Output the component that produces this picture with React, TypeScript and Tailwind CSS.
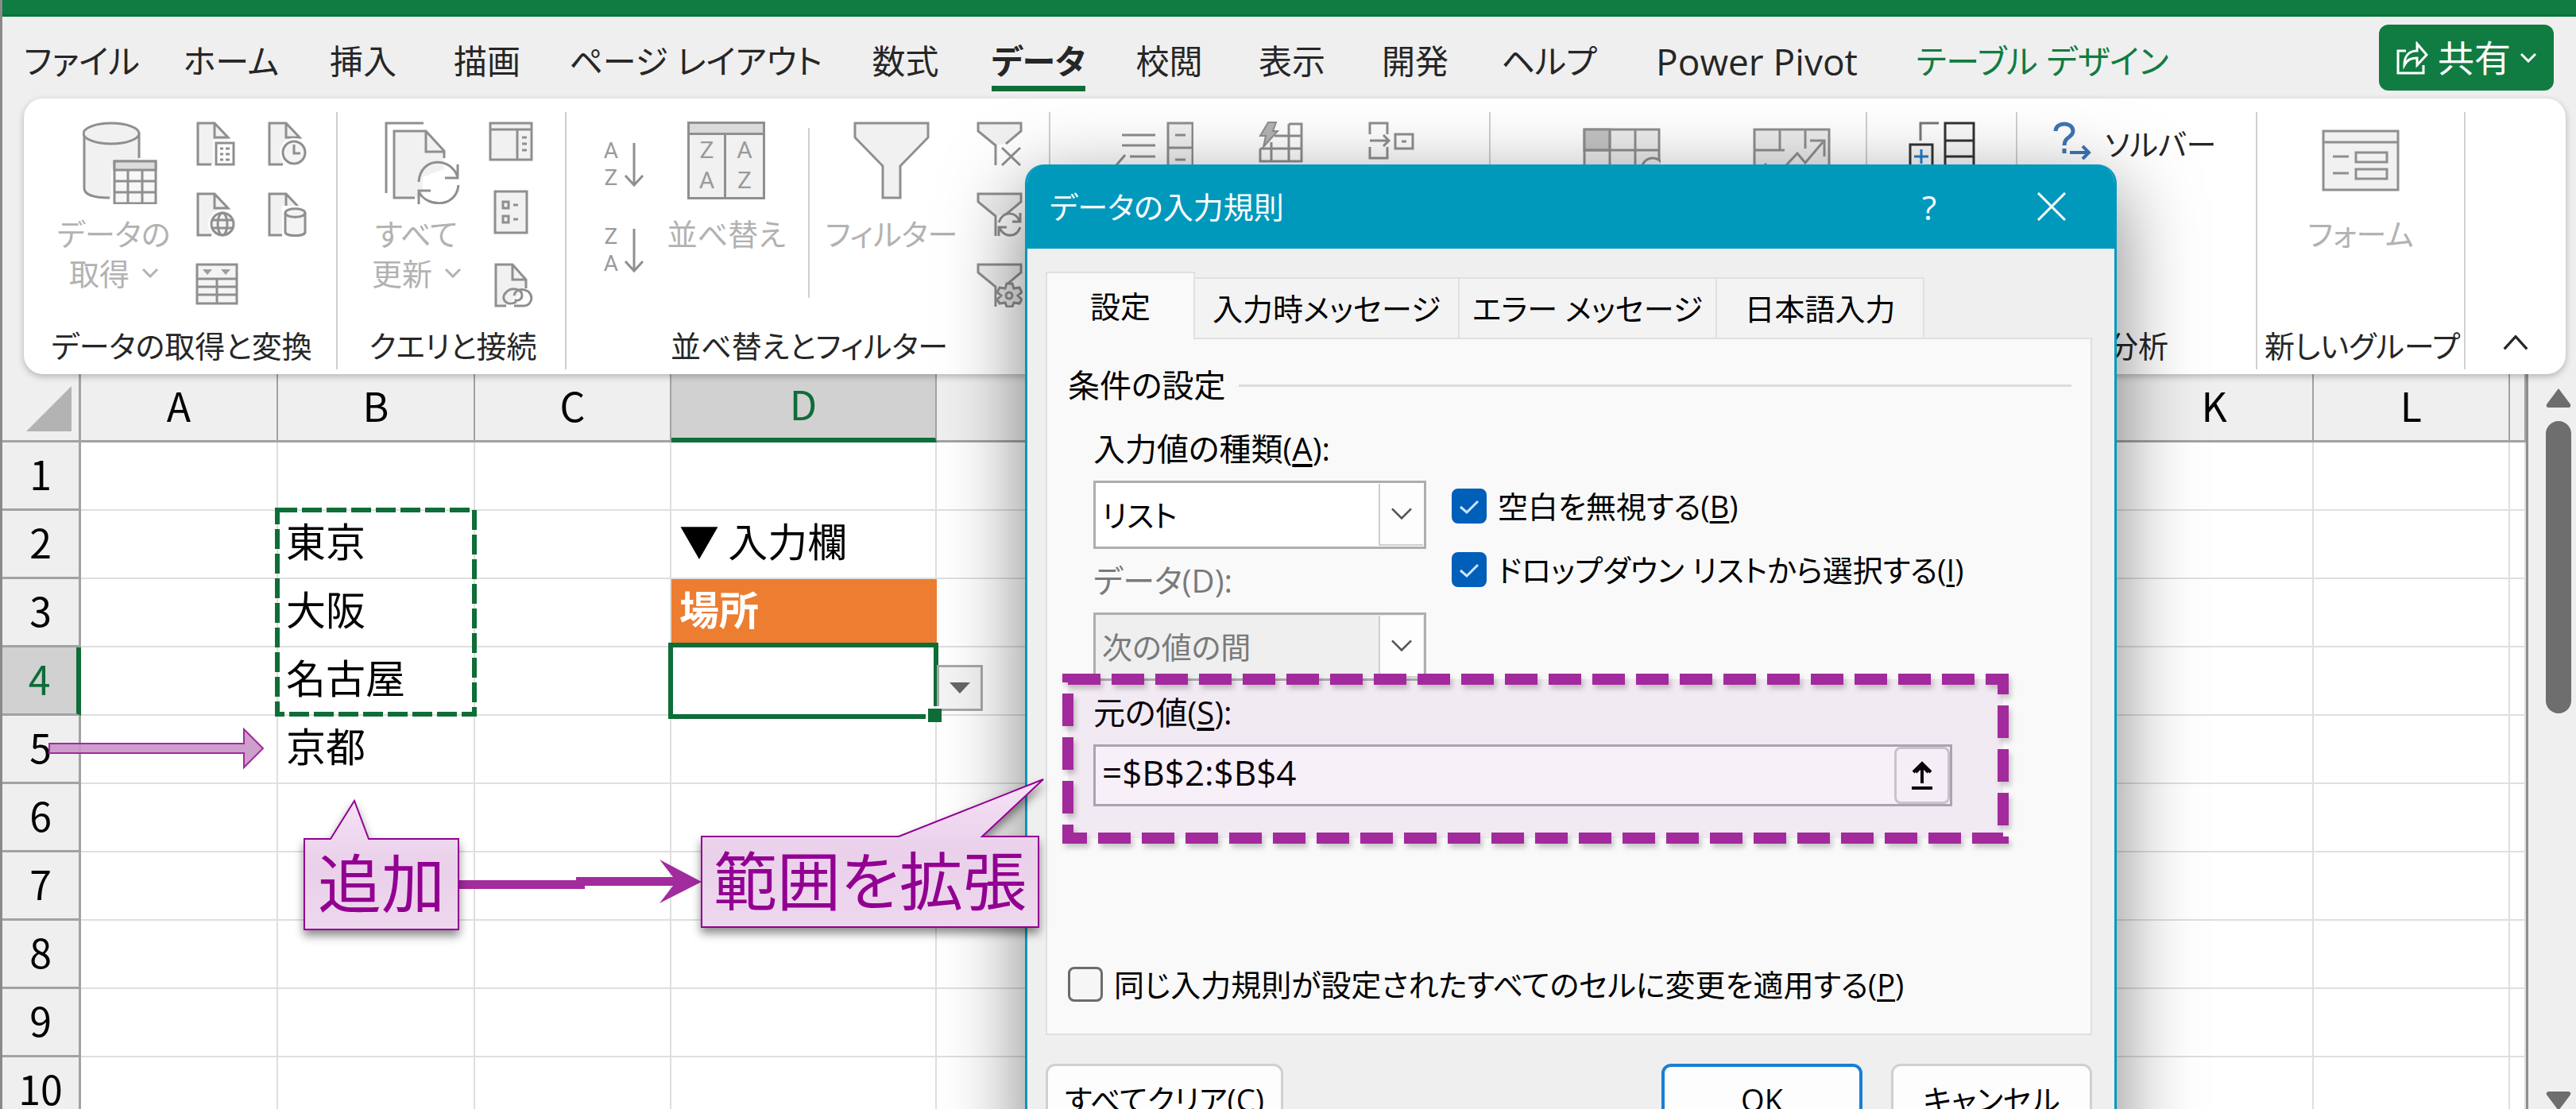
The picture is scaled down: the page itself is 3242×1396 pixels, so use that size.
import React, { useState } from "react";

const TABS = [
      "ファイル",
      "ホーム",
      "挿入",
      "描画",
      "ページ レイアウト",
      "数式",
      "データ",
      "校閲",
      "表示",
      "開発",
      "ヘルプ",
      "Power Pivot",
      "テーブル デザイン",
];

const COLUMNS = ["A", "B", "C", "D", "E", "F", "G", "H", "I", "J", "K", "L", ""];
const ROWS = [1, 2, 3, 4, 5, 6, 7, 8, 9, 10];

const CELLS: Record<string, string> = {
      B2: "東京",
      B3: "大阪",
      B4: "名古屋",
      B5: "京都",
      D2: "▼ 入力欄",
      D3: "場所",
};

const Icon = ({
      w,
      h,
      children,
}: {
      w: number;
      h: number;
      children: React.ReactNode;
}) => (
      <svg
            width={w}
            height={h}
            viewBox={`0 0 ${w} ${h}`}
            fill="none"
            stroke="#8f8f8f"
            strokeWidth={3}
            className="shrink-0"
            aria-hidden="true"
      >
            {children}
      </svg>
);

const Page = () => (
      <>
            <path d="M3 2H24L41 21V54H3Z" fill="#f1f1f1" stroke="none" />
            <path d="M20 54H3V2H24L41 20H24V2" />
      </>
);

const DatabaseIcon = () => (
      <Icon w={94} h={104}>
            <path d="M2 14V84C2 92 14 97 36 97V60H71V14Z" fill="#f1f1f1" stroke="none" />
            <path d="M2 14V84C2 91 12 96 34 96M71 14V46" />
            <ellipse cx="36" cy="15" rx="35" ry="13" fill="#f1f1f1" />
            <rect x="40" y="50" width="52" height="53" fill="#f7f7f7" />
            <rect x="40" y="50" width="52" height="11" fill="#dcdcdc" />
            <path d="M57 61V103M75 61V103M40 75H92M40 89H92" strokeWidth={3} />
      </Icon>
);

const PageListIcon = () => (
      <Icon w={50} h={56}>
            <Page />
            <rect x="22" y="23" width="28" height="33" fill="#fff" stroke="none" />
            <rect x="26" y="27" width="22" height="27" fill="#fff" />
            <path d="M31 34H35M38 34H43M31 41H35M38 41H43M31 48H35M38 48H43" />
      </Icon>
);

const PageClockIcon = () => (
      <Icon w={50} h={56}>
            <Page />
            <circle cx="34" cy="39" r="18" fill="#fff" stroke="none" />
            <circle cx="34" cy="39" r="14" fill="#f4f4f4" />
            <path d="M34 29V40H42" />
      </Icon>
);

const PageGlobeIcon = () => (
      <Icon w={50} h={56}>
            <Page />
            <circle cx="34" cy="40" r="18" fill="#fff" stroke="none" />
            <circle cx="34" cy="40" r="14" fill="#f4f4f4" />
            <ellipse cx="34" cy="40" rx="6" ry="14" />
            <path d="M21 35H47M21 45H47" />
      </Icon>
);

const PageDatabaseIcon = () => (
      <Icon w={50} h={56}>
            <Page />
            <rect x="19" y="17" width="31" height="39" fill="#fff" stroke="none" />
            <path d="M23 26C23 19 48 19 48 26V50C48 56 23 56 23 50Z" fill="#f4f4f4" />
            <path d="M23 26C23 33 48 33 48 26" />
      </Icon>
);

const TableFilterIcon = () => (
      <Icon w={54} h={54}>
            <rect x="2" y="2" width="50" height="49" fill="#f4f4f4" />
            <path d="M2 20H52M2 30H52M2 40H52M27 20V51" />
            <path d="M9 8H21L15 15ZM32 8H44L38 15Z" fill="#9d9d9d" stroke="none" />
      </Icon>
);

const RefreshAllIcon = () => (
      <Icon w={96} h={104}>
            <path d="M2 90V2H49" />
            <path d="M12 96V12H52L75 36V60L48 70V96Z" fill="#f1f1f1" stroke="none" />
            <path d="M38 96H12V12H52L75 37V46M52 12V38H75" />
            <path d="M43 76C45 44 84 44 92 70M92 54V71H76M93 80C90 110 52 108 43 88M43 104V87H58" />
      </Icon>
);

const PaneIcon = () => (
      <Icon w={56} h={50}>
            <rect x="2" y="2" width="52" height="46" fill="#f1f1f1" />
            <path d="M2 10H54M36 10V48M42 20H48M42 28H48M42 36H48" />
      </Icon>
);

const PropertiesIcon = () => (
      <Icon w={56} h={56}>
            <rect x="8" y="2" width="40" height="52" fill="#f1f1f1" />
            <path d="M18 15H25V23H18ZM18 33H25V41H18ZM31 19H37M31 37H37" />
      </Icon>
);

const PageLinkIcon = () => (
      <Icon w={56} h={56}>
            <path d="M9 2H32L47 21V32L22 54H9Z" fill="#f1f1f1" stroke="none" />
            <path d="M22 54H9V2H30L47 21V32M30 2V21H47" />
            <path d="M35 49C22 56 14 44 22 37C28 30 42 32 42 41C42 46 36 49 33 46M32 41C34 32 44 32 50 36C58 44 52 54 44 54H32" />
      </Icon>
);

const SortIcon = ({ first, second }: { first: string; second: string }) => (
      <span className="flex items-center gap-1 text-[#9a9a9a]">
            <span className="flex w-6 flex-col text-center text-[28px] leading-[34px] [font-family:Roboto,sans-serif]">
                  <span>{first}</span>
                  <span>{second}</span>
            </span>
            <Icon w={26} h={58}>
                  <path d="M13 2V54M2 43L13 55L24 43" />
            </Icon>
      </span>
);

const SortDialogIcon = () => (
      <span className="flex h-[98px] w-[98px] flex-col border-3 border-[#8f8f8f] bg-[#f1f1f1] text-[30px] leading-[38px] text-[#9a9a9a] [font-family:Roboto,sans-serif]">
            <span className="h-[14px] border-b-3 border-[#8f8f8f] bg-[#dadada]" />
            <span className="grid flex-1 grid-cols-2 text-center">
                  <span className="flex flex-col border-r-3 border-[#8f8f8f]">
                        <span>Z</span>
                        <span>A</span>
                  </span>
                  <span className="flex flex-col">
                        <span>A</span>
                        <span>Z</span>
                  </span>
            </span>
      </span>
);

const FunnelIcon = () => (
      <Icon w={96} h={98}>
            <path d="M2 2H94V20L59 56V96H37V56L2 20Z" fill="#f1f1f1" />
      </Icon>
);

const SmallFunnel = ({ kind }: { kind: "clear" | "reapply" | "advanced" }) => (
      <Icon w={58} h={56}>
            <path d="M2 2H56V12L38 27L24 30L2 12Z" fill="#f1f1f1" stroke="none" />
            <path d="M24 55V30L2 12V2H56V12L37 28" />
            {kind === "clear" && <path d="M32 33L55 55M55 33L32 55" />}
            {kind === "reapply" && (
                  <path d="M28 38C34 22 50 25 54 36M55 26V37H45M55 44C50 58 35 57 29 45M28 55V44H38" />
            )}
            {kind === "advanced" && (
                  <>
                        <path
                              d="M38 26H45L47 32L54 31L57 37L52 41L57 46L54 51L47 50L45 55H38L36 50L29 51L26 46L31 41L26 37L29 31L36 32Z"
                              fill="#e8e8e8"
                        />
                        <circle cx="41" cy="41" r="4" />
                  </>
            )}
      </Icon>
);

const TextToColumnsIcon = () => (
      <Icon w={98} h={96}>
            <path d="M8 17H50M8 30H50M18 44H50M12 42L0 56" />
            <path d="M66 2H97V96H66ZM66 33H97M66 64H97" fill="#f1f1f1" />
            <path d="M75 17H88M75 48H88" />
      </Icon>
);

const FlashFillIcon = () => (
      <Icon w={56} h={52}>
            <path d="M38 3H54V50H2V34M20 18H54M2 34H54M16 26V50M38 3V50" />
            <path d="M12 1H22L18 12H24L6 32L9 18H2Z" fill="#b4b4b4" strokeWidth={2} />
      </Icon>
);

const ConsolidateIcon = () => (
      <Icon w={58} h={50}>
            <path d="M2 16V2H24V16M2 32V46H24V32M2 24H26M19 17L26 24L19 31" />
            <path d="M34 16H56V34H34ZM42 25H48" />
      </Icon>
);

const WhatIfIcon = () => (
      <Icon w={98} h={86}>
            <rect x="2" y="2" width="94" height="84" fill="#ededed" />
            <rect x="2" y="2" width="32" height="26" fill="#c4c4c4" />
            <path d="M34 2V86M66 2V86M2 28H96M2 56H96" />
            <circle cx="88" cy="52" r="14" fill="#ededed" />
      </Icon>
);

const ForecastIcon = () => (
      <Icon w={98} h={86}>
            <rect x="2" y="2" width="94" height="84" fill="#ededed" />
            <path d="M34 2V28M66 2V26M2 28H40" />
            <path d="M4 58L16 46L28 62L56 32L66 44L88 18M72 16H90V36" />
      </Icon>
);

const GroupOutlineIcon = () => (
      <svg width="84" height="92" viewBox="0 0 84 92" fill="#fafafa" stroke="#333" strokeWidth={3} aria-hidden="true">
            <path d="M15 24V2H38" fill="none" stroke="#777" />
            <rect x="2" y="29" width="28" height="30" />
            <path d="M46 2H82V92H46ZM46 24H82M46 44H82" />
            <path d="M16 35V53M7 44H25" stroke="#1e7fd0" />
      </svg>
);

const FormIcon = () => (
      <Icon w={98} h={88}>
            <rect x="2" y="12" width="94" height="74" fill="#f1f1f1" />
            <path d="M2 26H96M14 44H34M14 65H34" />
            <path d="M43 39H82V51H43ZM43 60H82V72H43Z" />
      </Icon>
);

const Chevron = ({ size = 20, up = false }: { size?: number; up?: boolean }) => (
      <svg
            width={size}
            height={size / 2 + 2}
            viewBox="0 0 20 12"
            fill="none"
            stroke="currentColor"
            strokeWidth={size > 24 ? 2 : 3}
            className="shrink-0"
            aria-hidden="true"
      >
            <path d={up ? "M1 11L10 1L19 11" : "M1 1L10 10L19 1"} />
      </svg>
);

const BigButton = ({
      icon,
      lines,
      menu,
}: {
      icon: React.ReactNode;
      lines: string[];
      menu?: boolean;
}) => (
      <button
            type="button"
            className="flex w-[150px] shrink-0 flex-col items-center text-[38px] leading-[50px] whitespace-nowrap text-[#b2b2b2]"
      >
            <span className={`mb-2 flex h-[108px] items-start ${menu ? "pl-4" : ""}`}>{icon}</span>
            {lines.map((line, i) => (
                  <span key={line} className="flex items-center gap-4">
                        {line}
                        {menu && i === lines.length - 1 && <Chevron />}
                  </span>
            ))}
      </button>
);

const Group = ({
      label,
      className = "",
      children,
}: {
      label?: string;
      className?: string;
      children?: React.ReactNode;
}) => (
      <section className="flex min-w-0 flex-col border-r-2 border-[#d0d0d0]">
            <div className={`flex h-[264px] items-start pt-3 ${className}`}>{children}</div>
            <h2 className="pl-1 text-center text-[38px] leading-[60px] whitespace-nowrap">{label}</h2>
      </section>
);

const tabClass = (tab: string) => {
      if (tab === "データ") return "border-b-7 border-[#0f6d38] font-bold";
      if (tab === "テーブル デザイン") return "text-[#107c41]";
      if (tab === "Power Pivot") return "text-[46px]";
      return "";
};

const TabBar = () => (
      <nav className="relative grid h-[103px] shrink-0 grid-cols-[200fr_176fr_156fr_156fr_369fr_159fr_176fr_153fr_156fr_154fr_183fr_340fr_379fr_482fr] items-center text-center text-[42px] whitespace-nowrap text-[#262626]">
            {TABS.map((tab) => (
                  <a key={tab} href="#" className="flex h-full justify-center">
                        <span className={`mt-5 h-[74px] leading-[72px] ${tabClass(tab)}`}>{tab}</span>
                  </a>
            ))}
            <button
                  type="button"
                  className="mr-7 flex h-[83px] w-[220px] items-center justify-center gap-3 justify-self-end rounded-xl bg-[#107c41] text-[46px] text-white"
            >
                  <svg width="40" height="42" viewBox="0 0 40 42" fill="none" stroke="currentColor" strokeWidth={3} aria-hidden="true">
                        <path d="M12 12H2V40H34V30" />
                        <path d="M10 30C10 18 16 12 26 12V3L38 17L26 30V21C18 21 14 23 10 30Z" />
                  </svg>
                  共有
                  <Chevron />
            </button>
      </nav>
);

const Ribbon = () => (
      <div className="relative z-10 mr-[13px] ml-[27px] grid h-[347px] shrink-0 grid-cols-[395fr_288fr_609fr_554fr_474fr_189fr_302fr_262fr_126fr] rounded-3xl bg-white pt-[17px] pb-[21px] text-[#262626] shadow-[0_3px_8px_rgba(0,0,0,0.25)]">
            <Group label="データの取得と変換" className="gap-7 pl-[38px]">
                  <BigButton icon={<DatabaseIcon />} lines={["データの", "取得"]} menu />
                  <div className="grid grid-cols-2 gap-x-9 gap-y-[33px]">
                        <PageListIcon />
                        <PageClockIcon />
                        <PageGlobeIcon />
                        <PageDatabaseIcon />
                        <TableFilterIcon />
                  </div>
            </Group>
            <Group label="クエリと接続" className="gap-4 pl-6">
                  <BigButton icon={<RefreshAllIcon />} lines={["すべて", "更新"]} menu />
                  <div className="flex flex-col gap-9">
                        <PaneIcon />
                        <PropertiesIcon />
                        <PageLinkIcon />
                  </div>
            </Group>
            <Group label="並べ替えとフィルター" className="pl-11">
                  <div className="flex flex-col gap-10 pt-5">
                        <SortIcon first="A" second="Z" />
                        <SortIcon first="Z" second="A" />
                  </div>
                  <div className="flex pl-7">
                        <BigButton icon={<SortDialogIcon />} lines={["並べ替え"]} />
                  </div>
                  <div className="mx-7 mt-2 h-[214px] w-0.5 bg-[#d0d0d0]" />
                  <BigButton icon={<FunnelIcon />} lines={["フィルター"]} />
                  <div className="ml-8 flex flex-col gap-[33px]">
                        <SmallFunnel kind="clear" />
                        <SmallFunnel kind="reapply" />
                        <SmallFunnel kind="advanced" />
                  </div>
            </Group>
            <Group label="データ ツール" className="gap-[82px] pl-[82px]">
                  <TextToColumnsIcon />
                  <FlashFillIcon />
                  <ConsolidateIcon />
            </Group>
            <Group label="予測" className="gap-[116px] pt-5 pl-[116px]">
                  <WhatIfIcon />
                  <ForecastIcon />
            </Group>
            <Group className="justify-center">
                  <GroupOutlineIcon />
            </Group>
            <Group label="分析" className="gap-4 pl-11">
                  <svg width="50" height="48" viewBox="0 0 50 48" fill="none" stroke="#3f74b5" strokeWidth={5} aria-hidden="true">
                        <path d="M4 12C4 0 26 0 26 12C26 20 15 19 15 30M15 34V40" />
                        <path d="M22 39H46M38 31L46 39L38 47" strokeWidth={4} />
                  </svg>
                  <button type="button" className="text-[38px] leading-[56px] whitespace-nowrap">
                        ソルバー
                  </button>
            </Group>
            <Group label="新しいグループ" className="justify-center">
                  <BigButton icon={<FormIcon />} lines={["フォーム"]} />
            </Group>
            <button type="button" aria-label="リボンを折りたたむ" className="flex items-end justify-center pb-6">
                  <Chevron size={34} up />
            </button>
      </div>
);

const cellClass = (id: string) => {
      if (id === "D3") return "bg-[#ed7d31] font-bold text-white border-[#ed7d31]";
      return "bg-white border-[#dfdfdf]";
};

const Sheet = () => (
      <div className="flex flex-1 items-start">
            <div className="min-w-0 flex-1">
                  <table className="w-full table-fixed border-separate border-spacing-0 border-r-3 border-[#8f8f8f] text-[50px] leading-none text-black [font-family:'Noto_Sans_CJK_JP',sans-serif]">
                        <colgroup>
                              <col className="w-[99px]" />
                              <col className="w-[248px]" />
                              <col className="w-[248px]" />
                              <col className="w-[247px]" />
                              <col className="w-[334px]" />
                              {COLUMNS.slice(4, 12).map((name) => (
                                    <col key={name} />
                              ))}
                              <col className="w-[20px]" />
                        </colgroup>
                        <thead>
                              <tr className="h-[86px]">
                                    <th className="border-r-3 border-b-3 border-[#a2a2a2] p-0">
                                          <svg className="mt-1 ml-[30px]" width="57" height="57" viewBox="0 0 57 57" aria-hidden="true">
                                                <path d="M57 0V57H0Z" fill="#b3b3b3" />
                                          </svg>
                                    </th>
                                    {COLUMNS.map((name) => (
                                          <th
                                                key={name}
                                                scope="col"
                                                className={`p-0 pb-2 font-normal ${
                                                      name === "D"
                                                            ? "border-r-2 border-b-6 border-r-[#a2a2a2] border-b-[#0f6d38] bg-[#d1d1d1] text-[#0f6d38]"
                                                            : "border-r-2 border-b-3 border-[#a2a2a2]"
                                                }`}
                                          >
                                                {name}
                                          </th>
                                    ))}
                              </tr>
                        </thead>
                        <tbody>
                              {ROWS.map((row) => (
                                    <tr key={row} className="h-[86px]">
                                          <th
                                                scope="row"
                                                className={`p-0 pb-2 font-normal ${
                                                      row === 4
                                                            ? "border-r-6 border-b-3 border-r-[#0f6d38] border-b-[#a2a2a2] bg-[#d1d1d1] text-[#0f6d38]"
                                                            : "border-r-3 border-b-3 border-[#a2a2a2]"
                                                }`}
                                          >
                                                {row}
                                          </th>
                                          {COLUMNS.map((name) => {
                                                const id = `${name}${row}`;
                                                return (
                                                      <td
                                                            key={id}
                                                            className={`relative border-r-2 border-b-2 p-0 pb-3 pl-[10px] text-left whitespace-nowrap ${cellClass(id)}`}
                                                      >
                                                            {CELLS[id]}
                                                            {id === "B2" && (
                                                                  <svg
                                                                        className="absolute -top-1 -left-1 z-10"
                                                                        width="254"
                                                                        height="264"
                                                                        fill="none"
                                                                        stroke="#0f6d38"
                                                                        strokeWidth={6}
                                                                        strokeDasharray="25 6"
                                                                        aria-hidden="true"
                                                                  >
                                                                        <rect x="3" y="3" width="248" height="257" />
                                                                  </svg>
                                                            )}
                                                            {id === "D4" && (
                                                                  <>
                                                                        <div className="absolute -inset-x-1 -top-1.5 -bottom-1.5 z-10 border-6 border-[#0f6d38]" />
                                                                        <div className="absolute -right-2 -bottom-2.5 z-20 size-5 border-t-3 border-l-3 border-white bg-[#0f6d38]" />
                                                                        <button
                                                                              type="button"
                                                                              aria-label="候補を開く"
                                                                              className="absolute -right-[60px] bottom-1 z-10 flex h-[58px] w-[58px] items-center justify-center border-3 border-[#a8a8ac] bg-[#f4f4f4]"
                                                                        >
                                                                              <svg width="26" height="14" viewBox="0 0 26 14" aria-hidden="true">
                                                                                    <path d="M0 0H26L13 14Z" fill="#666" />
                                                                              </svg>
                                                                        </button>
                                                                  </>
                                                            )}
                                                      </td>
                                                );
                                          })}
                                    </tr>
                              ))}
                        </tbody>
                  </table>
            </div>
            <div className="flex h-[925px] w-[60px] shrink-0 flex-col items-center pt-[18px] pl-4 text-[#6e6e6e]">
                  <svg width="32" height="24" viewBox="0 0 32 24" aria-hidden="true">
                        <path d="M16 0L31 20Q32 24 28 24H4Q0 24 1 20Z" fill="currentColor" />
                  </svg>
                  <div className="mt-[17px] h-[368px] w-8 rounded-full bg-current" />
                  <svg className="mt-auto" width="32" height="22" viewBox="0 0 32 22" aria-hidden="true">
                        <path d="M16 24L1 4Q0 0 4 0H28Q32 0 31 4Z" fill="currentColor" />
                  </svg>
            </div>
      </div>
);

const SelectBox = ({
      id,
      label,
      accessKey,
      value,
      disabled,
}: {
      id: string;
      label: string;
      accessKey: string;
      value: string;
      disabled?: boolean;
}) => (
      <div className={`flex flex-col gap-3 ${disabled ? "text-[#7a7a7a]" : ""}`}>
            <label htmlFor={id} className="text-[40px] leading-[56px]">
                  {label}({disabled ? accessKey : <u className="underline-offset-4">{accessKey}</u>}):
            </label>
            <div className="relative">
                  <select
                        id={id}
                        disabled={disabled}
                        className={`h-[86px] w-full appearance-none border-3 border-[#adadb3] pl-2 opacity-100 ${
                              disabled ? "bg-[#efefef]" : "bg-white"
                        }`}
                  >
                        <option>{value}</option>
                  </select>
                  <span className="pointer-events-none absolute inset-y-1 right-1 flex w-14 items-center justify-center border-l-2 border-b-2 border-[#cfcfcf] bg-[#fdfdfd] text-[#555]">
                        <Chevron size={28} />
                  </span>
            </div>
      </div>
);

const CheckBox = ({
      label,
      accessKey,
      defaultChecked = false,
}: {
      label: string;
      accessKey: string;
      defaultChecked?: boolean;
}) => {
      const [checked, setChecked] = useState(defaultChecked);

      return (
            <label className="flex items-center gap-[14px] leading-[60px] whitespace-nowrap">
                  <span className="relative flex size-11 shrink-0">
                        <input
                              type="checkbox"
                              checked={checked}
                              onChange={(e) => setChecked(e.target.checked)}
                              className="size-11 appearance-none rounded-lg border-3 border-[#6b6b6b] bg-[#f6f6f6] checked:border-[#005fb8] checked:bg-[#005fb8]"
                        />
                        {checked && (
                              <svg
                                    className="pointer-events-none absolute inset-0"
                                    viewBox="0 0 44 44"
                                    fill="none"
                                    stroke="#cfe3f6"
                                    strokeWidth={3}
                                    aria-hidden="true"
                              >
                                    <path d="M11 23L19 30L33 16" />
                              </svg>
                        )}
                  </span>
                  <span>
                        {label}(<u className="underline-offset-4">{accessKey}</u>)
                  </span>
            </label>
      );
};

const DialogTabs = () => (
      <div role="tablist" className="relative z-10 -mb-0.5 flex items-end">
            <button
                  type="button"
                  role="tab"
                  aria-selected="true"
                  className="h-[85px] w-[188px] border-2 border-b-0 border-[#e0e0e0] bg-[#f9f9f9]"
            >
                  設定
            </button>
            <button type="button" role="tab" className="h-[78px] w-[333px] border-2 border-l-0 border-[#e0e0e0] bg-[#f3f3f3]">
                  入力時メッセージ
            </button>
            <button type="button" role="tab" className="h-[78px] w-[324px] border-2 border-l-0 border-[#e0e0e0] bg-[#f3f3f3]">
                  エラー メッセージ
            </button>
            <button type="button" role="tab" className="h-[78px] w-[261px] border-2 border-l-0 border-[#e0e0e0] bg-[#f3f3f3]">
                  日本語入力
            </button>
      </div>
);

const ValidationDialog = () => {
      const [source, setSource] = useState("=$B$2:$B$4");

      return (
            <div
                  role="dialog"
                  aria-label="データの入力規則"
                  className="absolute top-[207px] left-[1287px] z-20 w-[1374px] overflow-hidden rounded-t-3xl border-x-3 border-[#0099bc] bg-[#efefef] text-[38px] whitespace-nowrap text-black shadow-[0_30px_100px_rgba(0,0,0,0.5)]"
            >
                  <header className="flex h-[106px] items-center bg-[#0099bc] pl-7 text-white">
                        <h1 className="flex-1">データの入力規則</h1>
                        <button type="button" className="w-16 text-[42px]">
                              ?
                        </button>
                        <button type="button" aria-label="閉じる" className="mr-[61px] ml-[104px]">
                              <svg width="36" height="36" viewBox="0 0 36 36" stroke="currentColor" strokeWidth={3} aria-hidden="true">
                                    <path d="M1 1L35 35M35 1L1 35" />
                              </svg>
                        </button>
                  </header>
                  <div className="pt-[29px] pr-7 pb-10 pl-[23px]">
                        <DialogTabs />
                        <div className="border-2 border-[#e0e0e0] bg-[#f9f9f9] pt-[30px] pr-6 pb-8 pl-[26px]">
                              <div className="flex items-center gap-4 text-[40px] leading-[56px]">
                                    <h2>条件の設定</h2>
                                    <span className="h-[3px] flex-1 bg-[#dcdcdc]" />
                              </div>
                              <div className="mt-6 flex gap-8 pl-8">
                                    <div className="flex w-[419px] flex-col gap-3">
                                          <SelectBox id="allow" label="入力値の種類" accessKey="A" value="リスト" />
                                          <SelectBox id="data" label="データ" accessKey="D" value="次の値の間" disabled />
                                    </div>
                                    <div className="flex flex-col gap-5 pt-[70px]">
                                          <CheckBox label="空白を無視する" accessKey="B" defaultChecked />
                                          <CheckBox label="ドロップダウン リストから選択する" accessKey="I" defaultChecked />
                                    </div>
                              </div>
                              <div className="mt-3 flex flex-col gap-3 pr-[150px] pl-8">
                                    <label htmlFor="source" className="text-[40px] leading-[56px]">
                                          元の値(<u className="underline-offset-4">S</u>):
                                    </label>
                                    <div className="flex h-[78px] border-3 border-[#adadb3] bg-white">
                                          <input
                                                id="source"
                                                value={source}
                                                onChange={(e) => setSource(e.target.value)}
                                                className="min-w-0 flex-1 pb-2 pl-2 text-[44px] outline-none"
                                          />
                                          <button
                                                type="button"
                                                aria-label="範囲を選択"
                                                className="flex w-[70px] items-center justify-center rounded-lg border-3 border-[#cfcfcf] bg-[#fdfdfd]"
                                          >
                                                <svg width="28" height="36" viewBox="0 0 28 36" fill="none" stroke="#000" strokeWidth={4} aria-hidden="true">
                                                      <path d="M14 28V4M3 14L14 3L25 14M6 14L14 6L22 14M1 34H27" />
                                                </svg>
                                          </button>
                                    </div>
                              </div>
                              <div className="mt-[194px]">
                                    <CheckBox label="同じ入力規則が設定されたすべてのセルに変更を適用する" accessKey="P" />
                              </div>
                        </div>
                        <div className="mt-9 flex gap-9">
                              <button type="button" className="h-[90px] w-[299px] rounded-xl border-3 border-[#d0d0d0] bg-[#fdfdfd]">
                                    すべてクリア(<u className="underline-offset-4">C</u>)
                              </button>
                              <button type="button" className="ml-auto h-[90px] w-[253px] rounded-xl border-4 border-[#1a7fd4] bg-[#fdfdfd]">
                                    OK
                              </button>
                              <button type="button" className="h-[90px] w-[253px] rounded-xl border-3 border-[#d0d0d0] bg-[#fdfdfd]">
                                    キャンセル
                              </button>
                        </div>
                  </div>
            </div>
      );
};

// notes drawn on top of the sheet and the dialog
const Annotations = () => (
      <div className="pointer-events-none absolute inset-y-0 -left-[3px] z-30 w-[2600px] text-[80px] leading-[114px] whitespace-nowrap text-[#920092]">
            <svg className="absolute top-0 left-0" width="2600" height="1396" viewBox="0 0 2600 1396" aria-hidden="true">
                  <defs>
                        <linearGradient id="note" x1="0" y1="0" x2="0" y2="1">
                              <stop offset="0" stopColor="#f6e2f6" />
                              <stop offset="0.5" stopColor="#ead0ea" />
                              <stop offset="1" stopColor="#eed8ee" />
                        </linearGradient>
                        <filter id="drop" x="-20%" y="-20%" width="140%" height="160%">
                              <feDropShadow dx="0" dy="7" stdDeviation="6" floodOpacity="0.45" />
                        </filter>
                        <filter id="soft" x="-10%" y="-10%" width="120%" height="120%">
                              <feDropShadow dx="3" dy="5" stdDeviation="3" floodOpacity="0.2" />
                        </filter>
                  </defs>
                  <rect x="1344" y="855" width="1177" height="200" fill="#a22b9d" fillOpacity="0.07" />
                  <path
                        d="M1344 855H2521V1055H1344Z"
                        fill="none"
                        stroke="#a22b9d"
                        strokeWidth={14}
                        strokeDasharray="41 14"
                        filter="url(#soft)"
                  />
                  <path
                        d="M62 936H307V918L331 942L307 966V948H62Z"
                        fill="#c993c7"
                        fillOpacity="0.9"
                        stroke="#a22b9d"
                        strokeWidth={2}
                  />
                  <path
                        d="M577 1108H725V1104H847L830 1082L883 1110L830 1137L847 1115H736V1119H577Z"
                        fill="#a22b9d"
                  />
                  <g fill="url(#note)" stroke="#920092" strokeWidth={2} filter="url(#drop)">
                        <path d="M383 1056H416L446 1008L464 1056H577V1170H383Z" />
                        <path d="M883 1053H1131L1313 981L1236 1053H1307V1167H883Z" />
                  </g>
            </svg>
            <p className="absolute top-[1054px] left-[383px] w-[194px] text-center">追加</p>
            <p className="absolute top-[1051px] left-[883px] w-[424px] text-center">範囲を拡張</p>
      </div>
);

export default function App() {
      return (
            <div
                  lang="ja"
                  className="relative flex h-screen flex-col overflow-hidden border-l-3 border-[#8a8a8a] bg-[#efefef] [font-family:'Open_Sans','Noto_Sans_CJK_JP',sans-serif] [font-feature-settings:'palt']"
            >
                  <div className="h-[21px] shrink-0 border-b-3 border-[#057535] bg-[#107c41]" />
                  <TabBar />
                  <Ribbon />
                  <Sheet />
                  <ValidationDialog />
                  <Annotations />
            </div>
      );
}
